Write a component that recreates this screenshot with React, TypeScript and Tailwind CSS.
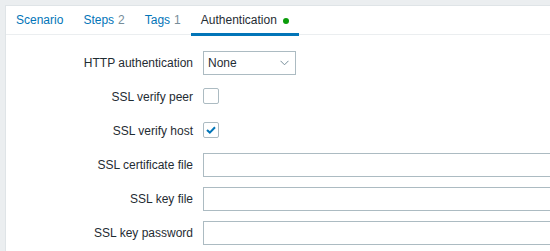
import React from "react";

const font = { fontFamily: '"Liberation Sans", Arial, sans-serif' };

function Tab({ label, count, active, dot }: { label: string; count?: number; active?: boolean; dot?: boolean }) {
  return (
    <div className="relative flex h-[28px] items-center px-[10px]">
      <span className={active ? "text-[#1f2c33]" : "text-[#0275b8]"}>{label}</span>
      {count !== undefined && <span className="ml-[4px] text-[#768d99]">{count}</span>}
      {dot && <span className="ml-[6px] mt-[1px] inline-block h-[6px] w-[6px] rounded-full bg-[#0a9c0a]" />}
      {active && <span className="absolute bottom-[-2px] left-0 right-0 h-[3px] bg-[#0275b8]" />}
    </div>
  );
}

function Label({ children }: { children: React.ReactNode }) {
  return <div className="flex h-[24px] items-center justify-end text-[#1f2c33]">{children}</div>;
}

function Checkbox({ checked }: { checked?: boolean }) {
  return (
    <div className="flex h-[24px] items-center">
      <div className="mt-[-2px] flex h-[16px] w-[16px] items-center justify-center rounded-[2px] border border-[#acbbc2] bg-white">
        {checked && (
          <svg width="10" height="8" viewBox="0 0 10 8">
            <path d="M1 4 L3.8 6.6 L9 1.2" fill="none" stroke="#0275b8" strokeWidth="2" />
          </svg>
        )}
      </div>
    </div>
  );
}

function TextInput() {
  return <div className="h-[24px] w-[453px] border border-[#acbbc2] bg-white" />;
}

export default function App() {
  return (
    <div className="h-[251px] w-[550px] overflow-hidden bg-[#ebeef0] pl-[5px] pt-[5px] text-[12px]" style={font}>
      <div className="h-[300px] w-[700px] border-l border-t border-[#dfe4e7] bg-white">
        <div className="flex border-b border-[#ebeef0]">
          <Tab label="Scenario" />
          <Tab label="Steps" count={2} />
          <Tab label="Tags" count={1} />
          <Tab label="Authentication" active dot />
        </div>
        <div className="grid grid-cols-[187px_1fr] gap-x-[10px] gap-y-[10px] pt-[16px]">
          <Label>HTTP authentication</Label>
          <div className="flex h-[24px] w-[93px] items-center justify-between border border-[#acbbc2] bg-white pl-[4px] pr-[6px] text-[#1f2c33]">
            <span>None</span>
            <svg width="9" height="6" viewBox="0 0 9 6">
              <path d="M0.5 0.8 L4.5 4.8 L8.5 0.8" fill="none" stroke="#768d99" strokeWidth="1" />
            </svg>
          </div>
          <Label>SSL verify peer</Label>
          <Checkbox />
          <Label>SSL verify host</Label>
          <Checkbox checked />
          <Label>SSL certificate file</Label>
          <TextInput />
          <Label>SSL key file</Label>
          <TextInput />
          <Label>SSL key password</Label>
          <TextInput />
        </div>
      </div>
    </div>
  );
}
